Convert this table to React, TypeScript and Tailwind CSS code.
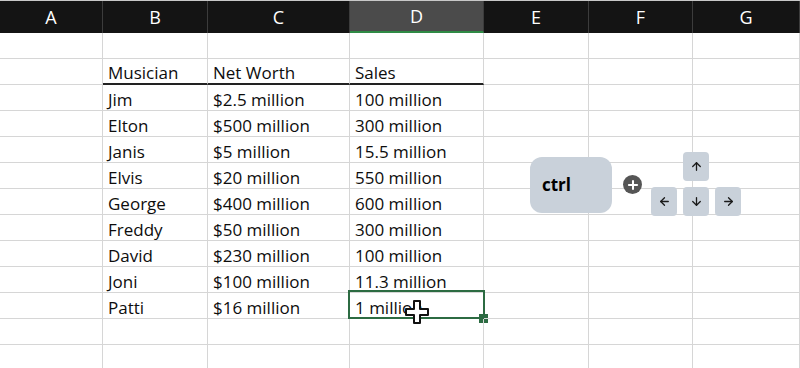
import { ArrowUp, ArrowDown, ArrowLeft, ArrowRight, Plus } from 'lucide-react';

// Sheet data: musician, net worth, sales
const rows: [string, string, string][] = [
  ['', '', ''],
  ['Musician', 'Net Worth', 'Sales'],
  ['Jim', '$2.5 million', '100 million'],
  ['Elton', '$500 million', '300 million'],
  ['Janis', '$5 million', '15.5 million'],
  ['Elvis', '$20 million', '550 million'],
  ['George', '$400 million', '600 million'],
  ['Freddy', '$50 million', '300 million'],
  ['David', '$230 million', '100 million'],
  ['Joni', '$100 million', '11.3 million'],
  ['Patti', '$16 million', '1 million'],
  ['', '', ''],
  ['', '', ''],
];

const cols = ['A', 'B', 'C', 'D', 'E', 'F', 'G'];

function Cursor() {
  return (
    <svg width="26" height="26" viewBox="0 0 26 26" className="absolute left-[54px] top-[6px]">
      <path
        d="M10 2 H16 V10 H24 V16 H16 V24 H10 V16 H2 V10 H10 Z"
        fill="#fff"
        stroke="#111"
        strokeWidth="2"
        strokeLinejoin="round"
      />
    </svg>
  );
}

function Key({ children }: { children: React.ReactNode }) {
  return (
    <div className="w-[26px] h-[29px] rounded-[4px] bg-[#c9d1da] flex items-center justify-center text-[#1a1a1a]">
      {children}
    </div>
  );
}

export default function App() {
  return (
    <div
      className="relative w-[800px] h-[368px] overflow-hidden bg-white text-[#0d0d0d]"
      style={{ fontFamily: '"Open Sans", "Liberation Sans", sans-serif' }}
    >
      {/* Column header */}
      <div className="grid grid-cols-[103px_105px_142px_134px_105px_104px_107px] h-[33px] border-t border-[#c8c8c8] bg-[#141414]">
        {cols.map((c, i) => (
          <div
            key={c}
            className={
              'flex items-center justify-center text-[18px] text-white border-r border-[#3c3c3c] ' +
              (i === 3 ? 'bg-[#4b4b4b] border-b-2 border-b-[#2f8a45]' : '')
            }
          >
            {c}
          </div>
        ))}
      </div>

      {/* Cells */}
      <div className="grid grid-cols-[103px_105px_142px_134px_105px_104px_107px] auto-rows-[26px] text-[17px]">
        {rows.map((r, ri) =>
          cols.map((c, ci) => {
            const val = ci >= 1 && ci <= 3 ? r[ci - 1] : '';
            const headRow = ri === 1 && ci >= 1 && ci <= 3;
            const selected = ri === 10 && ci === 3;
            return (
              <div
                key={ri + c}
                className={
                  'relative flex items-center pl-[5px] pt-[4px] whitespace-nowrap border-r border-[#d6d6d6] ' +
                  (headRow ? 'border-b-2 border-b-[#222]' : 'border-b border-b-[#d6d6d6]')
                }
              >
                {val}
                {selected && (
                  <>
                    <div className="absolute -top-[3px] -left-[2px] -right-[2px] -bottom-[1px] border-[2.5px] border-[#2c6b42]" />
                    <div className="absolute -right-[5px] -bottom-[5px] w-[9px] h-[9px] bg-[#2c6b42]" />
                    <Cursor />
                  </>
                )}
              </div>
            );
          })
        )}
      </div>

      {/* Shortcut overlay: ctrl + arrows */}
      <div className="absolute left-[530px] top-[152px] flex items-start">
        <div className="w-[82px] h-[56px] mt-[5px] rounded-[12px] bg-[#c9d1da] flex items-center pl-[12px] text-[17px] font-bold text-black">
          ctrl
        </div>
        <div className="ml-[11px] mt-[23px] w-[19px] h-[19px] rounded-full bg-[#555] flex items-center justify-center">
          <Plus size={14} strokeWidth={3.5} color="#fff" />
        </div>
        <div className="ml-[9px] flex flex-col items-center gap-[6px]">
          <Key>
            <ArrowUp size={13} strokeWidth={2.4} />
          </Key>
          <div className="flex gap-[6px]">
            <Key>
              <ArrowLeft size={13} strokeWidth={2.4} />
            </Key>
            <Key>
              <ArrowDown size={13} strokeWidth={2.4} />
            </Key>
            <Key>
              <ArrowRight size={13} strokeWidth={2.4} />
            </Key>
          </div>
        </div>
      </div>
    </div>
  );
}
